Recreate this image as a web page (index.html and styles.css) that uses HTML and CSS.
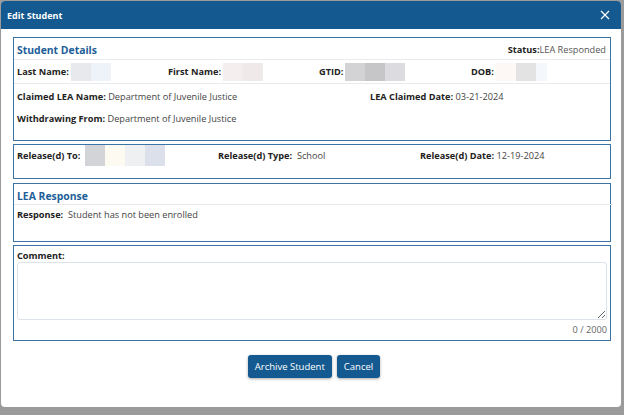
FILE: index.html
```html
<!DOCTYPE html>
<html>
<head>
<meta charset="utf-8">
<link rel="stylesheet" href="styles.css">
</head>
<body>
<div class="modal">
  <div class="modal-header">
    <span class="modal-title">Edit Student</span>
    <svg class="close" width="10" height="10" viewBox="0 0 10 10"><path d="M1 1 L9 9 M9 1 L1 9" stroke="#fff" stroke-width="1.2" fill="none"/></svg>
  </div>
  <div class="modal-body">
    <div class="card">
      <div class="card-head">
        <span class="card-title">Student Details</span>
        <span class="status"><b>Status:</b>LEA Responded</span>
      </div>
      <div class="grid4 sep">
        <div class="field"><b>Last Name:</b><span class="blur"><i style="background:#e8e9ec"></i><i style="background:#eef3f9"></i></span></div>
        <div class="field"><b>First Name:</b><span class="blur"><i style="background:#f4eeee"></i><i style="background:#efe9ea"></i></span></div>
        <div class="field"><b>GTID:</b><span class="blur"><i style="background:#d3d3d6"></i><i style="background:#c6c6c8"></i><i style="background:#dcdce0"></i></span></div>
        <div class="field"><b>DOB:</b><span class="blur"><i style="background:#fdf8f6"></i><i style="background:#e3e3e3"></i><i style="background:#f4f7fc;width:11px"></i></span></div>
      </div>
      <div class="grid2 first">
        <div class="line"><b>Claimed LEA Name:</b> Department of Juvenile Justice</div>
        <div class="line"><b>LEA Claimed Date:</b> 03-21-2024</div>
      </div>
      <div class="grid2 last">
        <div class="line"><b>Withdrawing From:</b> Department of Juvenile Justice</div>
      </div>
    </div>

    <div class="card card-release">
      <div class="grid3">
        <div class="field"><b>Release(d) To:</b><span class="blur tall wide"><i style="background:#d3d4d8"></i><i style="background:#fdfaf2"></i><i style="background:#eff0f1"></i><i style="background:#dbe0ea"></i></span></div>
        <div class="field"><b>Release(d) Type:</b>&nbsp; School</div>
        <div class="field"><b>Release(d) Date:</b>&nbsp;12-19-2024</div>
      </div>
    </div>

    <div class="card card-response">
      <div class="card-head small">
        <span class="card-title">LEA Response</span>
      </div>
      <div class="line resp"><b>Response:</b>&nbsp; Student has not been enrolled</div>
    </div>

    <div class="card card-comment">
      <div class="comment-label">Comment:</div>
      <textarea class="comment"></textarea>
      <div class="counter">0 / 2000</div>
    </div>
  </div>
  <div class="modal-footer">
    <button class="btn">Archive Student</button>
    <button class="btn">Cancel</button>
  </div>
</div>
</body>
</html>
```

FILE: styles.css
```css
* { box-sizing: border-box; }
html, body { margin: 0; padding: 0; }
body {
  background: #9b9b9b;
  width: 624px;
  height: 415px;
  overflow: hidden;
  font-family: "Open Sans", "Noto Sans", sans-serif;
  font-size: 9.2px;
  color: #444;
}
.modal {
  margin: 1px 3px 0 1px;
  width: 620px;
  height: 406px;
  background: #fff;
  border-radius: 4px;
  overflow: hidden;
  display: flex;
  flex-direction: column;
}
.modal-header {
  height: 28px;
  background: #14598f;
  display: flex;
  align-items: center;
  justify-content: space-between;
  padding: 0 11px 0 6px;
}
.modal-title {
  color: #fff;
  font-weight: 700;
  font-size: 9px;
}
.close { display: block; }
.modal-body {
  padding: 8px 10px 0 12px;
}
.card {
  border: 1px solid #3d74a6;
  padding: 0 3px;
}
.card + .card { margin-top: 3px; }
.card-response { margin-top: 4px !important; }
.card-head {
  display: flex;
  justify-content: space-between;
  align-items: center;
  padding-top: 2px;
  height: 22px;
  border-bottom: 1px solid #e8eaed;
  margin: 0 -3px 0 -3px;
  padding-left: 3px;
  padding-right: 4px;
}
.card-head.small { padding-top: 3px; height: 21px; margin-right: -6px; }
.card-title {
  color: #1e5e98;
  font-weight: 700;
  font-size: 10.4px;
}
.status { color: #555; }
.status b { color: #222; }
b { color: #222; font-weight: 700; }
.field {
  display: flex;
  align-items: center;
  white-space: nowrap;
}
.grid4 {
  display: grid;
  grid-template-columns: 151px 151px 152px 1fr;
  height: 24px;
  align-items: center;
}
.sep { border-bottom: 1px solid #e8eaed; margin: 0 -3px; padding-left: 3px; }
.grid2 {
  display: grid;
  grid-template-columns: 353px 1fr;
}
.grid2.first { padding-top: 2px; }
.grid2.last { padding-bottom: 10px; }
.line { line-height: 22px; white-space: nowrap; }
.blur { display: flex; margin-left: 2px; height: 18px; }
.blur i { display: block; width: 20px; height: 100%; }
.blur.tall { height: 21px; margin-left: 5px; }
.grid3 {
  display: grid;
  grid-template-columns: 201px 202px 1fr;
  height: 21px;
  align-items: center;
}
.card-release { height: 35px; }
.card-response { height: 59px; }
.resp { line-height: 20px; }
.card-comment { height: 96px; padding-top: 4px; }
.comment-label { font-weight: 700; color: #222; line-height: 12px; }
.comment {
  display: block;
  width: 100%;
  height: 58px;
  border: 1px solid #dde3ea;
  border-radius: 3px;
  resize: vertical;
  margin: 0;
  font-family: inherit;
}
.counter {
  text-align: right;
  color: #666;
  line-height: 14px;
  margin-top: 3px;
}
.modal-footer {
  display: flex;
  justify-content: center;
  gap: 5px;
  padding-top: 14px;
  padding-left: 6px;
}
.btn {
  height: 23px;
  padding: 0 7px;
  background: #14598f;
  color: #fff;
  border: none;
  border-radius: 3px;
  box-shadow: 0 1px 3px rgba(0,0,0,0.35);
  font-family: inherit;
  font-size: 9.5px;
}
```
